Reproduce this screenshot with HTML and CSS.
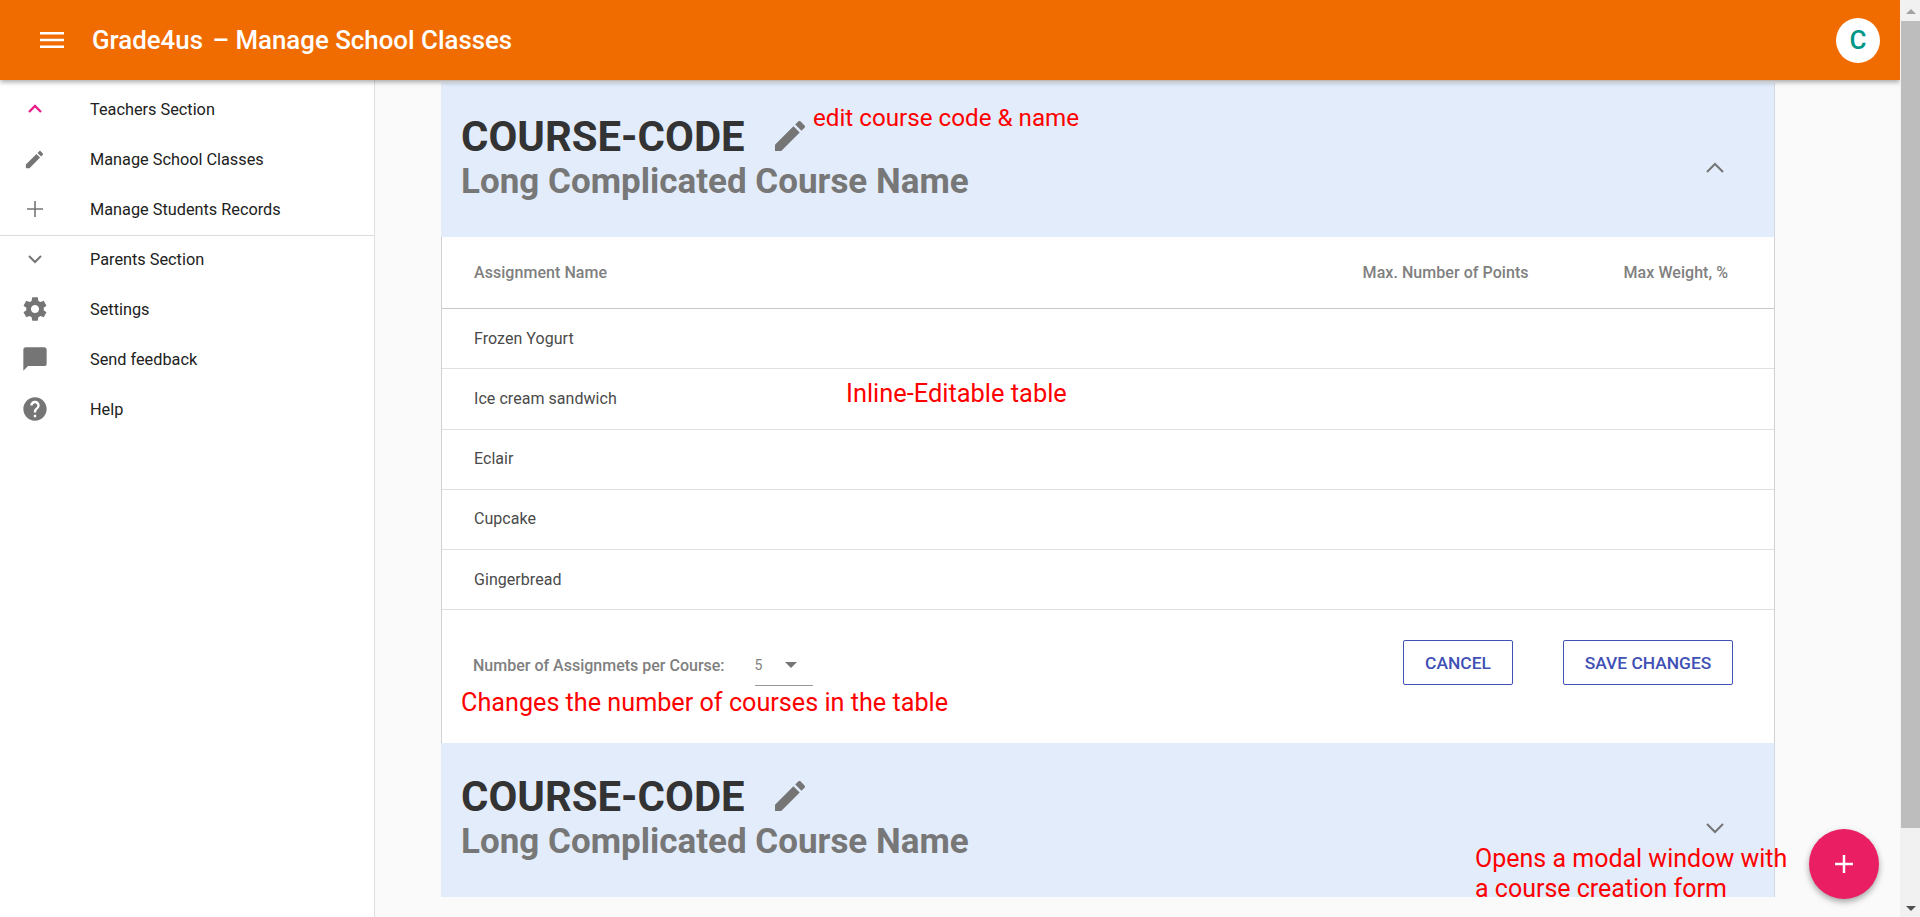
FILE: index.html
```html
<!DOCTYPE html>
<html lang="en">
<head>
<meta charset="utf-8">
<title>Grade4us – Manage School Classes</title>
<link rel="stylesheet" href="styles.css">
</head>
<body>
<div class="window">
  <div class="app">
    <header class="topbar">
      <svg class="menu-icon" viewBox="0 0 24 16"><path d="M0 0h24v2.6H0zM0 6.7h24v2.6H0zM0 13.4h24V16H0z"/></svg>
      <h1 class="app-title">Grade4us <span class="title-rest">– Manage School Classes</span></h1>
      <div class="avatar">C</div>
    </header>
    <div class="content-row">
      <nav class="sidebar">
        <div class="nav-item"><span class="nav-icon"><svg class="ic-chev pink" viewBox="0 0 16 10"><path d="M2 8l6-6 6 6"/></svg></span>Teachers Section</div>
        <div class="nav-item"><span class="nav-icon"><svg class="ic-22" viewBox="0 0 24 24"><path d="M3 17.25V21h3.75L17.81 9.94l-3.75-3.75L3 17.25zM20.71 7.04c.39-.39.39-1.02 0-1.41l-2.34-2.34c-.39-.39-1.02-.39-1.41 0l-1.83 1.83 3.75 3.75 1.83-1.83z"/></svg></span>Manage School Classes</div>
        <div class="nav-item nav-item-last"><span class="nav-icon"><svg class="ic-plus" viewBox="0 0 16 16"><path d="M8 0v16M0 8h16"/></svg></span>Manage Students Records</div>
        <div class="nav-item"><span class="nav-icon"><svg class="ic-chev" viewBox="0 0 16 10"><path d="M2 2l6 6 6-6"/></svg></span>Parents Section</div>
        <div class="nav-item"><span class="nav-icon"><svg class="ic-28" viewBox="0 0 24 24"><path d="M19.43 12.98c.04-.32.07-.64.07-.98s-.03-.66-.07-.98l2.11-1.65c.19-.15.24-.42.12-.64l-2-3.46c-.12-.22-.39-.3-.61-.22l-2.49 1c-.52-.4-1.08-.73-1.69-.98l-.38-2.65C14.46 2.18 14.25 2 14 2h-4c-.25 0-.46.18-.49.42l-.38 2.65c-.61.25-1.17.59-1.69.98l-2.49-1c-.23-.09-.49 0-.61.22l-2 3.46c-.13.22-.07.49.12.64l2.11 1.65c-.04.32-.07.65-.07.98s.03.66.07.98l-2.11 1.65c-.19.15-.24.42-.12.64l2 3.46c.12.22.39.3.61.22l2.49-1c.52.4 1.08.73 1.69.98l.38 2.65c.03.24.24.42.49.42h4c.25 0 .46-.18.49-.42l.38-2.65c.61-.25 1.17-.59 1.69-.98l2.49 1c.23.09.49 0 .61-.22l2-3.46c.12-.22.07-.49-.12-.64l-2.11-1.65zM12 15.5c-1.93 0-3.5-1.57-3.5-3.5s1.57-3.5 3.5-3.5 3.5 1.57 3.5 3.5-1.57 3.5-3.5 3.5z"/></svg></span>Settings</div>
        <div class="nav-item"><span class="nav-icon"><svg class="ic-28" viewBox="0 0 24 24"><path d="M20 2H4c-1.1 0-1.99.9-1.99 2L2 22l4-4h14c1.1 0 2-.9 2-2V4c0-1.1-.9-2-2-2z"/></svg></span>Send feedback</div>
        <div class="nav-item"><span class="nav-icon"><svg class="ic-28" viewBox="0 0 24 24"><path d="M12 2C6.48 2 2 6.48 2 12s4.48 10 10 10 10-4.48 10-10S17.52 2 12 2zm1 17h-2v-2h2v2zm2.07-7.75l-.9.92C13.45 12.9 13 13.5 13 15h-2v-.5c0-1.1.45-2.1 1.17-2.83l1.24-1.26c.37-.36.59-.86.59-1.41 0-1.1-.9-2-2-2s-2 .9-2 2H8c0-2.21 1.79-4 4-4s4 1.79 4 4c0 .88-.36 1.68-.93 2.25z"/></svg></span>Help</div>
      </nav>
      <main class="main">
        <section class="card">
          <div class="course-head">
            <div class="course-titles">
              <div class="code-line">
                <h2 class="course-code">COURSE-CODE</h2>
                <svg class="ic-pencil" viewBox="0 0 24 24"><path d="M3 17.25V21h3.75L17.81 9.94l-3.75-3.75L3 17.25zM20.71 7.04c.39-.39.39-1.02 0-1.41l-2.34-2.34c-.39-.39-1.02-.39-1.41 0l-1.83 1.83 3.75 3.75 1.83-1.83z"/></svg>
              </div>
              <div class="course-name">Long Complicated Course Name</div>
            </div>
            <svg class="ic-chev card-chev" viewBox="0 0 20 12"><path d="M2 10l8-8 8 8"/></svg>
            <span class="note note-edit">edit course code &amp; name</span>
          </div>
          <div class="card-body">
            <div class="table-row table-head">
              <span class="col-name">Assignment Name</span>
              <span class="col-points">Max. Number of Points</span>
              <span class="col-weight">Max Weight, %</span>
            </div>
            <div class="table-row">Frozen Yogurt</div>
            <div class="table-row">Ice cream sandwich</div>
            <div class="table-row">Eclair</div>
            <div class="table-row">Cupcake</div>
            <div class="table-row">Gingerbread</div>
            <span class="note note-table">Inline-Editable table</span>
            <div class="card-footer">
              <span class="per-label">Number of Assignmets per Course:</span>
              <div class="per-select"><span>5</span><i class="caret"></i></div>
              <div class="actions">
                <button class="btn btn-cancel">CANCEL</button>
                <button class="btn btn-save">SAVE CHANGES</button>
              </div>
              <span class="note note-count">Changes the number of courses in the table</span>
            </div>
          </div>
          <div class="course-head">
            <div class="course-titles">
              <div class="code-line">
                <h2 class="course-code">COURSE-CODE</h2>
                <svg class="ic-pencil" viewBox="0 0 24 24"><path d="M3 17.25V21h3.75L17.81 9.94l-3.75-3.75L3 17.25zM20.71 7.04c.39-.39.39-1.02 0-1.41l-2.34-2.34c-.39-.39-1.02-.39-1.41 0l-1.83 1.83 3.75 3.75 1.83-1.83z"/></svg>
              </div>
              <div class="course-name">Long Complicated Course Name</div>
            </div>
            <svg class="ic-chev card-chev" viewBox="0 0 20 12"><path d="M2 2l8 8 8-8"/></svg>
          </div>
        </section>
      </main>
    </div>
    <div class="note note-fab">Opens a modal window with<br>a course creation form</div>
    <button class="fab"><svg viewBox="0 0 16 16"><path d="M8 0v16M0 8h16"/></svg></button>
  </div>
  <div class="scrollbar">
    <i class="sb-up"></i>
    <div class="sb-thumb"></div>
    <i class="sb-down"></i>
  </div>
</div>
</body>
</html>
```
FILE: styles.css
```css
* { box-sizing: border-box; }
html, body { margin: 0; height: 100%; overflow: hidden; }
body { font-family: Roboto, "Liberation Sans", sans-serif; color: #333; background: #fafafa; }
.window { display: flex; height: 917px; width: 1920px; }
.app { position: relative; width: 1900px; display: flex; flex-direction: column; overflow: hidden; }

.topbar { position: relative; z-index: 2; flex: none; height: 80px; background: #f16c00; display: flex; align-items: center; padding: 0 20px 0 40px; box-shadow: 0 2px 5px rgba(0,0,0,.35); }
.menu-icon { width: 24px; height: 16px; fill: #fff; margin-right: 28px; }
.app-title { margin: 0 0 1px; font-size: 25.85px; font-weight: 500; color: #fff; flex: 1; }
.title-rest { margin-left: 3px; }
.avatar { width: 44px; height: 45px; border-radius: 50%; background: #fff; color: #009688; font-size: 26px; font-weight: 500; display: flex; align-items: center; justify-content: center; }

.content-row { flex: 1; display: flex; min-height: 0; }
.sidebar { flex: none; width: 375px; background: #fff; border-right: 1px solid #e0e0e0; padding-top: 4px; }
.nav-item { height: 50px; display: flex; align-items: center; font-size: 16.3px; color: #212121; }
.nav-item-last { height: 52px; margin-bottom: -2px; padding-bottom: 1px; border-bottom: 1px solid #dcdcdc; }
.nav-icon { flex: none; width: 90px; padding-right: 21px; display: flex; justify-content: center; fill: #757575; }
.ic-22 { width: 23px; height: 23px; }
.ic-28 { width: 28px; height: 28px; }
.ic-chev { fill: none; stroke: #757575; stroke-width: 2; width: 16px; height: 10px; }
.ic-chev.pink { stroke: #e91e8c; stroke-width: 2.4; }
.ic-plus { width: 16px; height: 16px; fill: none; stroke: #757575; stroke-width: 1.6; }

.main { flex: 1; min-width: 0; padding: 3px 0 0 66px; }
.card { width: 1334px; }
.course-head { position: relative; height: 154px; background: #e2ecfb; padding: 30px 20px 0 20px; display: flex; border-right: 1px solid #d2d8e2; }
.course-titles { flex: 1; }
.code-line { display: flex; align-items: center; height: 47px; }
.course-code { margin: 0; font-size: 41.9px; font-weight: 700; color: #333; line-height: 47px; }
.ic-pencil { width: 40px; height: 40px; fill: #757575; margin-left: 25px; margin-top: -2px; }
.course-name { margin-top: 1px; font-size: 35px; font-weight: 700; color: #777; line-height: 42px; }
.card-chev { width: 20px; height: 12px; margin: 49px 29px 0 0; }

.note { position: absolute; color: #f00; font-size: 24.2px; line-height: 32px; white-space: nowrap; }
.note-edit { left: 372px; top: 19px; }
.note-table { left: 404px; top: 140px; font-size: 25.4px; }
.note-count { left: 19px; top: 77px; font-size: 25.2px; }
.note-fab { left: 1475px; top: 844px; line-height: 30px; font-size: 25px; z-index: 3; }

.card-body { position: relative; background: #fff; border-left: 1px solid #d0d0d0; border-right: 1px solid #d0d0d0; }
.table-row { height: 60.25px; display: flex; align-items: center; padding: 0 0 1px 32px; font-size: 16px; letter-spacing: .05px; color: #4a4a4a; border-bottom: 1px solid #e0e0e0; }
.table-head { height: 72px; padding-bottom: 0; font-size: 16px; font-weight: 500; color: #808080; border-bottom-color: #c8c8c8; }
.col-name { flex: 1; }
.col-points { margin-right: 95px; }
.col-weight { margin-right: 46px; }

.card-footer { position: relative; height: 133px; display: flex; align-items: flex-start; padding: 30px 41px 0 31px; }
.per-label { font-size: 16px; font-weight: 500; color: #808080; line-height: 52px; height: 50px; }
.per-select { width: 58px; height: 46px; margin-left: 30px; display: flex; align-items: center; justify-content: space-between; padding: 5px 16px 0 0; border-bottom: 1px solid #999; font-size: 14px; color: #808080; }
.caret { width: 0; height: 0; border-left: 6px solid transparent; border-right: 6px solid transparent; border-top: 6px solid #757575; }
.actions { margin-left: auto; display: flex; gap: 50px; }
.btn { height: 45px; background: #fff; border: 1.5px solid #3f51b5; border-radius: 2px; color: #3f51b5; font-family: inherit; font-size: 17.4px; font-weight: 500; padding: 0; }
.btn-cancel { width: 110px; }
.btn-save { width: 170px; }

.fab { position: absolute; left: 1809px; top: 829px; width: 70px; height: 70px; border: 0; border-radius: 50%; background: #e91e63; display: flex; align-items: center; justify-content: center; box-shadow: 0 3px 6px rgba(0,0,0,.35); z-index: 4; padding: 0; }
.fab svg { width: 18px; height: 18px; fill: none; stroke: #fff; stroke-width: 2.2; }

.scrollbar { flex: none; width: 20px; background: #f1f1f1; display: flex; flex-direction: column; align-items: center; padding-left: 1px; }
.sb-up, .sb-down { flex: none; width: 0; height: 0; border-left: 5px solid transparent; border-right: 5px solid transparent; }
.sb-up { border-bottom: 5px solid #a3a3a3; margin: 9px 0 7px; }
.sb-thumb { width: 100%; height: 807px; background: #bdbdbd; }
.sb-down { border-top: 5px solid #505050; margin-top: 78px; }
```
